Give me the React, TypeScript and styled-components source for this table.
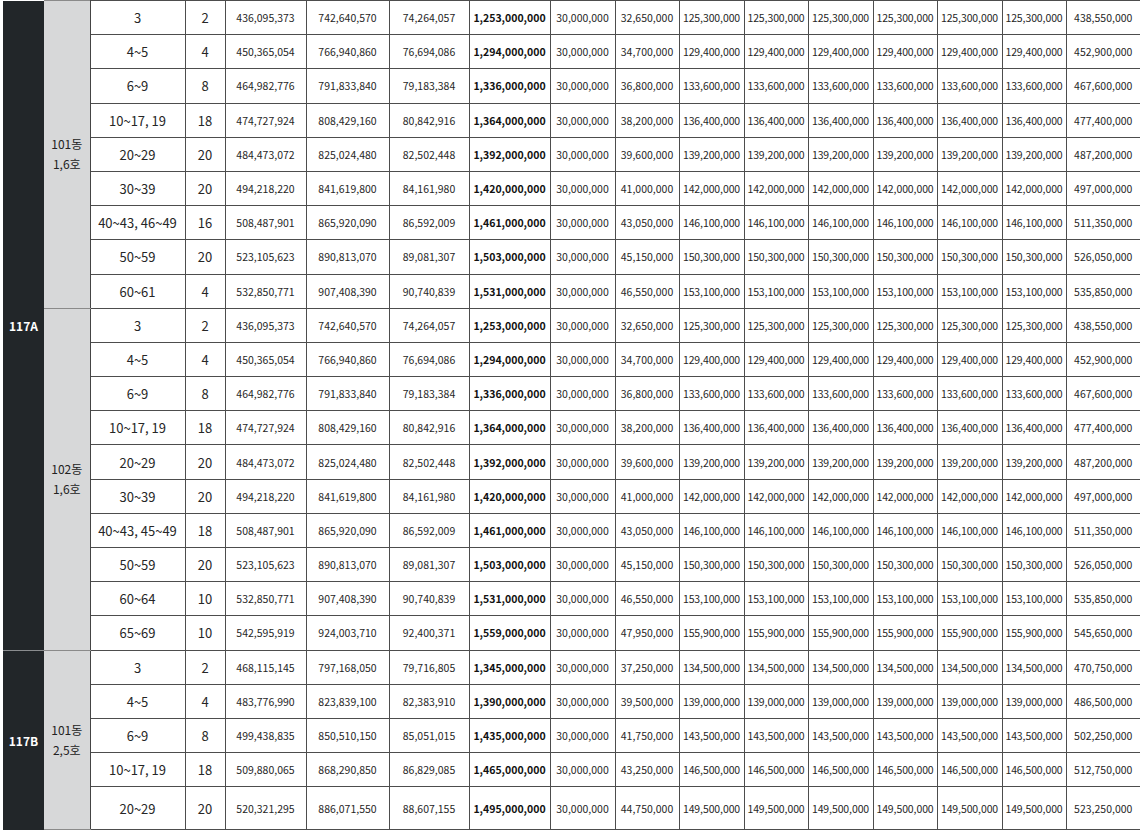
import React from "react";
import styled, { createGlobalStyle } from "styled-components";

const Global = createGlobalStyle`
  html, body { margin: 0; padding: 0; background: #ffffff; overflow: hidden; }
  body { font-family: "Noto Sans CJK KR", "Noto Sans", sans-serif; color: #222; }
`;

const Page = styled.div`
  padding-left: 3px;
  width: 1137px;
`;

const Table = styled.table`
  border-collapse: collapse;
  table-layout: fixed;
  width: 1137px;
`;

const Row = styled.tr<{ $h: number }>`
  height: ${(p) => p.$h}px;
`;

const TypeCell = styled.td<{ $last?: boolean }>`
  background: #222629;
  color: #ffffff;
  font-weight: 700;
  font-size: 12px;
  text-align: center;
  vertical-align: middle;
  padding: 0;
  border: none;
  border-bottom: ${(p) => (p.$last ? "none" : "1px solid #8a8c8e")};
`;

const GroupCell = styled.td`
  background: #d7d8d9;
  color: #222;
  font-size: 12px;
  line-height: 20px;
  text-align: center;
  vertical-align: middle;
  padding: 0;
  border-top: 1px solid #8a8a8a;
  border-bottom: 1px solid #8a8a8a;
  border-right: 1px solid #444;
`;

type Kind = "floor" | "count" | "num" | "total" | "pay";

const Cell = styled.td<{ $kind: Kind }>`
  padding: 0;
  text-align: center;
  vertical-align: middle;
  white-space: nowrap;
  overflow: hidden;
  border: 1px solid #4d4d4d;
  color: ${(p) => (p.$kind === "total" ? "#111" : "#262626")};
  font-weight: ${(p) => (p.$kind === "total" ? 700 : 400)};
  font-size: ${(p) =>
    p.$kind === "floor" || p.$kind === "count" ? "13px" : "10.5px"};
  letter-spacing: ${(p) => (p.$kind === "pay" ? "-0.1px" : "0")};
  &:last-child {
    border-right: none;
  }
`;

const TopRow = styled.tr`
  height: 0;
  & > td {
    padding: 0;
    height: 0;
    border-top: 1px solid #777;
  }
`;

type Line = [string, string, string, string, string, string, string, string, string, string];
// floor, count, a, b, c, total, pay1, pay2, mid, final

const a101: Line[] = [
  ["3", "2", "436,095,373", "742,640,570", "74,264,057", "1,253,000,000", "30,000,000", "32,650,000", "125,300,000", "438,550,000"],
  ["4~5", "4", "450,365,054", "766,940,860", "76,694,086", "1,294,000,000", "30,000,000", "34,700,000", "129,400,000", "452,900,000"],
  ["6~9", "8", "464,982,776", "791,833,840", "79,183,384", "1,336,000,000", "30,000,000", "36,800,000", "133,600,000", "467,600,000"],
  ["10~17, 19", "18", "474,727,924", "808,429,160", "80,842,916", "1,364,000,000", "30,000,000", "38,200,000", "136,400,000", "477,400,000"],
  ["20~29", "20", "484,473,072", "825,024,480", "82,502,448", "1,392,000,000", "30,000,000", "39,600,000", "139,200,000", "487,200,000"],
  ["30~39", "20", "494,218,220", "841,619,800", "84,161,980", "1,420,000,000", "30,000,000", "41,000,000", "142,000,000", "497,000,000"],
  ["40~43, 46~49", "16", "508,487,901", "865,920,090", "86,592,009", "1,461,000,000", "30,000,000", "43,050,000", "146,100,000", "511,350,000"],
  ["50~59", "20", "523,105,623", "890,813,070", "89,081,307", "1,503,000,000", "30,000,000", "45,150,000", "150,300,000", "526,050,000"],
  ["60~61", "4", "532,850,771", "907,408,390", "90,740,839", "1,531,000,000", "30,000,000", "46,550,000", "153,100,000", "535,850,000"],
];

const a102: Line[] = [
  ["3", "2", "436,095,373", "742,640,570", "74,264,057", "1,253,000,000", "30,000,000", "32,650,000", "125,300,000", "438,550,000"],
  ["4~5", "4", "450,365,054", "766,940,860", "76,694,086", "1,294,000,000", "30,000,000", "34,700,000", "129,400,000", "452,900,000"],
  ["6~9", "8", "464,982,776", "791,833,840", "79,183,384", "1,336,000,000", "30,000,000", "36,800,000", "133,600,000", "467,600,000"],
  ["10~17, 19", "18", "474,727,924", "808,429,160", "80,842,916", "1,364,000,000", "30,000,000", "38,200,000", "136,400,000", "477,400,000"],
  ["20~29", "20", "484,473,072", "825,024,480", "82,502,448", "1,392,000,000", "30,000,000", "39,600,000", "139,200,000", "487,200,000"],
  ["30~39", "20", "494,218,220", "841,619,800", "84,161,980", "1,420,000,000", "30,000,000", "41,000,000", "142,000,000", "497,000,000"],
  ["40~43, 45~49", "18", "508,487,901", "865,920,090", "86,592,009", "1,461,000,000", "30,000,000", "43,050,000", "146,100,000", "511,350,000"],
  ["50~59", "20", "523,105,623", "890,813,070", "89,081,307", "1,503,000,000", "30,000,000", "45,150,000", "150,300,000", "526,050,000"],
  ["60~64", "10", "532,850,771", "907,408,390", "90,740,839", "1,531,000,000", "30,000,000", "46,550,000", "153,100,000", "535,850,000"],
  ["65~69", "10", "542,595,919", "924,003,710", "92,400,371", "1,559,000,000", "30,000,000", "47,950,000", "155,900,000", "545,650,000"],
];

const b101: Line[] = [
  ["3", "2", "468,115,145", "797,168,050", "79,716,805", "1,345,000,000", "30,000,000", "37,250,000", "134,500,000", "470,750,000"],
  ["4~5", "4", "483,776,990", "823,839,100", "82,383,910", "1,390,000,000", "30,000,000", "39,500,000", "139,000,000", "486,500,000"],
  ["6~9", "8", "499,438,835", "850,510,150", "85,051,015", "1,435,000,000", "30,000,000", "41,750,000", "143,500,000", "502,250,000"],
  ["10~17, 19", "18", "509,880,065", "868,290,850", "86,829,085", "1,465,000,000", "30,000,000", "43,250,000", "146,500,000", "512,750,000"],
  ["20~29", "20", "520,321,295", "886,071,550", "88,607,155", "1,495,000,000", "30,000,000", "44,750,000", "149,500,000", "523,250,000"],
];

interface Group {
  type?: { label: string; span: number; last?: boolean };
  dong: string;
  ho: string;
  rows: Line[];
  lastTall?: boolean;
}

const groups: Group[] = [
  { type: { label: "117A", span: 19 }, dong: "101동", ho: "1,6호", rows: a101 },
  { dong: "102동", ho: "1,6호", rows: a102 },
  { type: { label: "117B", span: 5, last: true }, dong: "101동", ho: "2,5호", rows: b101, lastTall: true },
];

const widths = [41, 46, 95, 40, 81, 83, 80, 81, 65, 64, 65, 64, 65, 64, 65, 64, 74];

const DataCells: React.FC<{ line: Line }> = ({ line }) => {
  const [floor, count, a, b, c, total, p1, p2, mid, fin] = line;
  return (
    <>
      <Cell $kind="floor">{floor}</Cell>
      <Cell $kind="count">{count}</Cell>
      <Cell $kind="num">{a}</Cell>
      <Cell $kind="num">{b}</Cell>
      <Cell $kind="num">{c}</Cell>
      <Cell $kind="total">{total}</Cell>
      <Cell $kind="num">{p1}</Cell>
      <Cell $kind="num">{p2}</Cell>
      {Array.from({ length: 6 }).map((_, i) => (
        <Cell key={i} $kind="pay">{mid}</Cell>
      ))}
      <Cell $kind="num">{fin}</Cell>
    </>
  );
};

export default function App() {
  return (
    <Page>
      <Global />
      <Table>
        <colgroup>
          {widths.map((w, i) => (
            <col key={i} style={{ width: w }} />
          ))}
        </colgroup>
        <tbody>
          {groups.map((g, gi) =>
            g.rows.map((line, ri) => (
              <Row key={`${gi}-${ri}`} $h={g.lastTall && ri === g.rows.length - 1 ? 43 : 34.2}>
                {ri === 0 && g.type && (
                  <TypeCell rowSpan={g.type.span} $last={g.type.last}>
                    {g.type.label}
                  </TypeCell>
                )}
                {ri === 0 && (
                  <GroupCell rowSpan={g.rows.length}>
                    {g.dong}
                    <br />
                    {g.ho}
                  </GroupCell>
                )}
                <DataCells line={line} />
              </Row>
            ))
          )}
        </tbody>
      </Table>
    </Page>
  );
}
